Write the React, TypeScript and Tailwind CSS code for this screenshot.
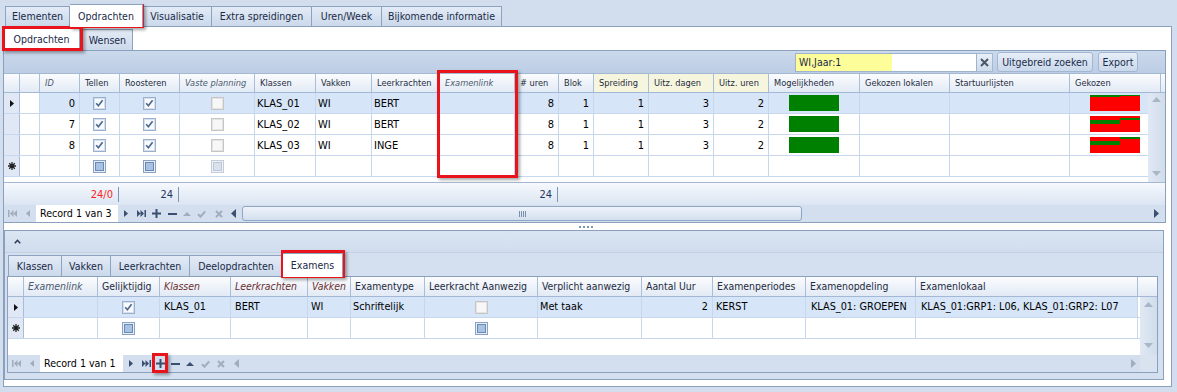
import React from 'react';

const F = "font-['DejaVu_Sans_Condensed','Liberation_Sans',sans-serif]";

type CK = 'on' | 'dis' | 'new' | 'newdis';
function Check({ k }: { k: CK }) {
  if (k === 'on')
    return (
      <svg width="13" height="13" viewBox="0 0 13 13">
        <rect x="0.5" y="0.5" width="12" height="12" fill="#eef2f8" stroke="#9bb0cc" />
        <rect x="1.5" y="1.5" width="10" height="10" fill="#f8fafd" stroke="#d6e0ec" />
        <path d="M3.2 6.2 L5.4 8.7 L9.6 3.3" fill="none" stroke="#4b6890" strokeWidth="1.7" />
      </svg>
    );
  if (k === 'dis')
    return (
      <svg width="13" height="13" viewBox="0 0 13 13">
        <rect x="0.5" y="0.5" width="12" height="12" fill="#f4f4f4" stroke="#c6c6c6" />
        <rect x="1.5" y="1.5" width="10" height="10" fill="#f7f7f7" stroke="#e4e4e4" />
      </svg>
    );
  if (k === 'new')
    return (
      <svg width="13" height="13" viewBox="0 0 13 13">
        <rect x="0.5" y="0.5" width="12" height="12" fill="#e8eef7" stroke="#8aa2c3" />
        <rect x="2.5" y="2.5" width="8" height="8" fill="#a8c2e3" stroke="#6b89b1" />
      </svg>
    );
  return (
    <svg width="13" height="13" viewBox="0 0 13 13">
      <rect x="0.5" y="0.5" width="12" height="12" fill="#eef1f5" stroke="#c3ccd8" />
      <rect x="2.5" y="2.5" width="8" height="8" fill="#d9e1ec" stroke="#bcc8d8" />
    </svg>
  );
}

const DARK = '#3d4f70';
const GRAY = '#a2acba';

const IFirst = ({ c }: { c: string }) => (
  <svg width="9" height="7" viewBox="0 0 9 7">
    <rect x="0" y="0" width="1.5" height="7" fill={c} />
    <path d="M5.5 0L2 3.5L5.5 7Z M9 0L5.5 3.5L9 7Z" fill={c} />
  </svg>
);
const IPrev = ({ c }: { c: string }) => (
  <svg width="4" height="7" viewBox="0 0 4 7">
    <path d="M4 0L0 3.5L4 7Z" fill={c} />
  </svg>
);
const INext = ({ c }: { c: string }) => (
  <svg width="4" height="7" viewBox="0 0 4 7">
    <path d="M0 0L4 3.5L0 7Z" fill={c} />
  </svg>
);
const ILast = ({ c }: { c: string }) => (
  <svg width="9" height="7" viewBox="0 0 9 7">
    <path d="M0 0L3.5 3.5L0 7Z M3.5 0L7 3.5L3.5 7Z" fill={c} />
    <rect x="7.5" y="0" width="1.5" height="7" fill={c} />
  </svg>
);
const IPlus = ({ c }: { c: string }) => (
  <svg width="9" height="9" viewBox="0 0 9 9">
    <rect x="3.5" y="0" width="2" height="9" fill={c} />
    <rect x="0" y="3.5" width="9" height="2" fill={c} />
  </svg>
);
const IMinus = ({ c }: { c: string }) => (
  <svg width="9" height="2" viewBox="0 0 9 2">
    <rect x="0" y="0" width="9" height="2" fill={c} />
  </svg>
);
const IUp = ({ c }: { c: string }) => (
  <svg width="8" height="5" viewBox="0 0 8 5">
    <path d="M0 5L4 1L8 5Z" fill={c} />
  </svg>
);
const ICheck = ({ c }: { c: string }) => (
  <svg width="9" height="8" viewBox="0 0 9 8">
    <path d="M1 4.2L3.5 6.7L8.2 1.3" fill="none" stroke={c} strokeWidth="2" />
  </svg>
);
const ICancel = ({ c }: { c: string }) => (
  <svg width="8" height="8" viewBox="0 0 8 8">
    <path d="M1 1L7 7M7 1L1 7" fill="none" stroke={c} strokeWidth="2" />
  </svg>
);
const ScrollLeft = ({ c }: { c: string }) => (
  <svg width="5" height="9" viewBox="0 0 5 9">
    <path d="M5 0L0 4.5L5 9Z" fill={c} />
  </svg>
);
const ScrollRight = ({ c }: { c: string }) => (
  <svg width="5" height="9" viewBox="0 0 5 9">
    <path d="M0 0L5 4.5L0 9Z" fill={c} />
  </svg>
);
const ScrollUp = () => (
  <svg width="9" height="5" viewBox="0 0 9 5">
    <path d="M0 5L4.5 0L9 5Z" fill="#a9b6c8" />
  </svg>
);
const ScrollDown = () => (
  <svg width="9" height="5" viewBox="0 0 9 5">
    <path d="M0 0L4.5 5L9 0Z" fill="#a9b6c8" />
  </svg>
);
const RowArrow = () => (
  <svg width="4" height="7" viewBox="0 0 4 7">
    <path d="M0 0L4 3.5L0 7Z" fill="#111" />
  </svg>
);
const NewStar = () => (
  <svg width="8" height="8" viewBox="0 0 8 8">
    <path d="M4 0V8M0 4H8M1.2 1.2L6.8 6.8M6.8 1.2L1.2 6.8" stroke="#222" strokeWidth="1.3" />
    <rect x="2.5" y="2.5" width="3" height="3" fill="#222" />
  </svg>
);

function Gekozen({ v }: { v: number }) {
  return (
    <svg width="50" height="16" viewBox="0 0 50 16">
      <rect x="0" y="0" width="50" height="16" fill="#ff0000" />
      {v === 1 && (
        <>
          <rect x="0" y="0" width="30" height="2" fill="#008000" />
          <rect x="30" y="0" width="20" height="1" fill="#008000" />
        </>
      )}
      {v === 2 && (
        <>
          <rect x="0" y="4" width="30" height="4" fill="#008000" />
          <rect x="30" y="2" width="20" height="2" fill="#008000" />
        </>
      )}
      {v === 3 && (
        <>
          <rect x="0" y="4" width="30" height="4" fill="#008000" />
          <rect x="30" y="0" width="20" height="2" fill="#008000" />
        </>
      )}
    </svg>
  );
}

type Col = { w: string; label: string; it?: boolean; mar?: boolean; right?: boolean; yel?: boolean };

const topCols: Col[] = [
  { w: 'w-[16px]', label: '' },
  { w: 'w-[20px]', label: '' },
  { w: 'w-[40px]', label: 'ID', it: true, right: true },
  { w: 'w-[40px]', label: 'Tellen' },
  { w: 'w-[60px]', label: 'Roosteren' },
  { w: 'w-[75px]', label: 'Vaste planning', it: true },
  { w: 'w-[61px]', label: 'Klassen' },
  { w: 'w-[56px]', label: 'Vakken' },
  { w: 'w-[68px]', label: 'Leerkrachten' },
  { w: 'w-[75px]', label: 'Examenlink', it: true },
  { w: 'w-[44px]', label: '# uren', right: true },
  { w: 'w-[35px]', label: 'Blok', right: true },
  { w: 'w-[55px]', label: 'Spreiding', right: true, yel: true },
  { w: 'w-[65px]', label: 'Uitz. dagen', right: true, yel: true },
  { w: 'w-[55px]', label: 'Uitz. uren', right: true, yel: true },
  { w: 'w-[91px]', label: 'Mogelijkheden' },
  { w: 'w-[90px]', label: 'Gekozen lokalen' },
  { w: 'w-[120px]', label: 'Startuurlijsten' },
  { w: 'w-[91px]', label: 'Gekozen' },
];

const botCols: Col[] = [
  { w: 'w-[16px]', label: '' },
  { w: 'w-[74px]', label: 'Examenlink', it: true },
  { w: 'w-[62px]', label: 'Gelijktijdig' },
  { w: 'w-[71px]', label: 'Klassen', it: true, mar: true },
  { w: 'w-[77px]', label: 'Leerkrachten', it: true, mar: true },
  { w: 'w-[43px]', label: 'Vakken', it: true, mar: true },
  { w: 'w-[74px]', label: 'Examentype' },
  { w: 'w-[113px]', label: 'Leerkracht Aanwezig' },
  { w: 'w-[104px]', label: 'Verplicht aanwezig' },
  { w: 'w-[71px]', label: 'Aantal Uur', right: true },
  { w: 'w-[93px]', label: 'Examenperiodes' },
  { w: 'w-[110px]', label: 'Examenopdeling' },
  { w: 'w-[222px]', label: 'Examenlokaal' },
];

function HeaderCell({ c, size, pad }: { c: Col; size: string; pad: string }) {
  const color = c.mar ? 'text-[#6a2d2d]' : c.it ? 'text-[#4c596e]' : 'text-[#1e2b40]';
  return (
    <div
      className={`${c.w} ${size} ${pad} shrink-0 h-full border-r border-[#aabed8] flex items-center whitespace-nowrap overflow-hidden ${
        c.yel ? 'bg-[#f6f6df]' : ''
      } ${c.it ? 'italic' : ''} ${color}`}
    >
      {c.label}
    </div>
  );
}

function Cell({ c, sel, pad, children }: { c: Col; sel?: boolean; pad: string; children?: React.ReactNode }) {
  return (
    <div
      className={`${c.w} shrink-0 h-full border-r border-[#c6d7ee] flex items-center whitespace-nowrap overflow-hidden text-black ${
        sel ? 'bg-[#d6e5f8]' : ''
      } ${c.right ? 'justify-end pr-[4px]' : pad}`}
    >
      {children}
    </div>
  );
}

function Indicator({ kind }: { kind: 'sel' | 'new' | '' }) {
  return (
    <div className="w-[16px] shrink-0 h-full bg-[#dfe8f4] border-r border-[#a9bcd6] flex items-center justify-center">
      {kind === 'sel' && <RowArrow />}
      {kind === 'new' && <NewStar />}
    </div>
  );
}

const topRows = [
  { id: '0', k: 'KLAS_01', v: 'WI', l: 'BERT', g: 1, sel: true },
  { id: '7', k: 'KLAS_02', v: 'WI', l: 'BERT', g: 2, sel: false },
  { id: '8', k: 'KLAS_03', v: 'WI', l: 'INGE', g: 3, sel: false },
];

function TopRow({ r }: { r: (typeof topRows)[number] | null }) {
  const s = !!r?.sel;
  const isNew = r === null;
  const nums = ['8', '1', '1', '3', '2'];
  return (
    <div className="flex h-[21px] border-b border-[#c6d7ee]">
      <Indicator kind={s ? 'sel' : isNew ? 'new' : ''} />
      <Cell c={topCols[1]} pad="pl-[2px]" />
      <Cell c={topCols[2]} sel={s} pad="pl-[2px]">{r?.id}</Cell>
      <Cell c={topCols[3]} sel={s} pad="justify-center">
        <Check k={isNew ? 'new' : 'on'} />
      </Cell>
      <Cell c={topCols[4]} sel={s} pad="justify-center">
        <Check k={isNew ? 'new' : 'on'} />
      </Cell>
      <Cell c={topCols[5]} sel={s} pad="justify-center">
        <Check k={isNew ? 'newdis' : 'dis'} />
      </Cell>
      <Cell c={topCols[6]} sel={s} pad="pl-[2px]">{r?.k}</Cell>
      <Cell c={topCols[7]} sel={s} pad="pl-[2px]">{r?.v}</Cell>
      <Cell c={topCols[8]} sel={s} pad="pl-[2px]">{r?.l}</Cell>
      <Cell c={topCols[9]} sel={s} pad="pl-[2px]" />
      {nums.map((n, i) => (
        <Cell key={i} c={topCols[10 + i]} sel={s} pad="pl-[2px]">
          {r ? n : ''}
        </Cell>
      ))}
      <Cell c={topCols[15]} sel={s} pad="justify-center">
        {r && <div className="w-[50px] h-[16px] bg-[#008000]" />}
      </Cell>
      <Cell c={topCols[16]} sel={s} pad="pl-[2px]" />
      <Cell c={topCols[17]} sel={s} pad="pl-[2px]" />
      <Cell c={topCols[18]} sel={s} pad="justify-center">
        {r && <Gekozen v={r.g} />}
      </Cell>
    </div>
  );
}

function BotRow({ isNew }: { isNew?: boolean }) {
  const s = !isNew;
  const P = 'pl-[4px]';
  return (
    <div className="flex h-[21px] border-b border-[#c6d7ee] text-[10.8px]">
      <Indicator kind={isNew ? 'new' : 'sel'} />
      <Cell c={botCols[1]} sel={s} pad={P} />
      <Cell c={botCols[2]} sel={s} pad="justify-center">
        <Check k={isNew ? 'new' : 'on'} />
      </Cell>
      <Cell c={botCols[3]} sel={s} pad={P}>{isNew ? '' : 'KLAS_01'}</Cell>
      <Cell c={botCols[4]} sel={s} pad={P}>{isNew ? '' : 'BERT'}</Cell>
      <Cell c={botCols[5]} sel={s} pad="pl-[3px]">{isNew ? '' : 'WI'}</Cell>
      <Cell c={botCols[6]} sel={s} pad="pl-[2px]">{isNew ? '' : 'Schriftelijk'}</Cell>
      <Cell c={botCols[7]} sel={s} pad="justify-center">
        <Check k={isNew ? 'new' : 'dis'} />
      </Cell>
      <Cell c={botCols[8]} sel={s} pad="pl-[2px]">{isNew ? '' : 'Met taak'}</Cell>
      <Cell c={botCols[9]} sel={s} pad={P}>{isNew ? '' : '2'}</Cell>
      <Cell c={botCols[10]} sel={s} pad="pl-[3px]">{isNew ? '' : 'KERST'}</Cell>
      <Cell c={botCols[11]} sel={s} pad="pl-[5px]">{isNew ? '' : 'KLAS_01: GROEPEN'}</Cell>
      <Cell c={botCols[12]} sel={s} pad="pl-[5px]">{isNew ? '' : 'KLAS_01:GRP1: L06, KLAS_01:GRP2: L07'}</Cell>
    </div>
  );
}

function FooterCell({ w, red, children }: { w: string; red?: boolean; children: React.ReactNode }) {
  return (
    <div className={`${w} shrink-0 h-[16px] flex items-center justify-end`}>
      <span className={red ? 'text-[#ff1c1c]' : 'text-[#1f3560]'}>{children}</span>
      <span className="ml-[5px] mr-[1px] w-px h-[15px] bg-[#7d94b6]" />
    </div>
  );
}

function Tab({ w, label, active, h }: { w: string; label: string; active?: boolean; h: string }) {
  return (
    <div
      className={`${w} ${h} shrink-0 flex items-center justify-center whitespace-nowrap text-[10.5px] text-[#1b2a47] border-t border-r border-[#8da3c0] ${
        active ? 'bg-white relative z-10 -mb-px' : 'bg-linear-to-b from-[#e3ebf6] to-[#cbd9eb]'
      }`}
    >
      {label}
    </div>
  );
}

function Grip() {
  return (
    <div className="flex gap-[1px]">
      <span className="w-px h-[6px] bg-[#7b90ad]" />
      <span className="w-px h-[6px] bg-[#7b90ad]" />
      <span className="w-px h-[6px] bg-[#7b90ad]" />
      <span className="w-px h-[6px] bg-[#7b90ad]" />
    </div>
  );
}

const redBox = 'absolute border-[3px] border-[#e8131b] shadow-[2px_2px_3px_rgba(0,0,0,0.35)] pointer-events-none';

export default function App() {
  return (
    <div className={`relative w-[1177px] h-[392px] overflow-hidden bg-[#d2deee] text-[11px] leading-none ${F}`}>
      {/* top tab strip */}
      <div className="flex items-end h-[26px] pl-[5px]">
        <div className="w-[65px] h-[20px] shrink-0 flex items-center justify-center text-[10.5px] text-[#1b2a47] border border-b-0 border-[#8da3c0] bg-linear-to-b from-[#e3ebf6] to-[#cbd9eb]">
          Elementen
        </div>
        <Tab w="w-[73px]" h="h-[23px]" label="Opdrachten" active />
        <Tab w="w-[69px]" h="h-[20px]" label="Visualisatie" />
        <Tab w="w-[100px]" h="h-[20px]" label="Extra spreidingen" />
        <Tab w="w-[70px]" h="h-[20px]" label="Uren/Week" />
        <Tab w="w-[120px]" h="h-[20px]" label="Bijkomende informatie" />
      </div>

      {/* tab page */}
      <div className="ml-[3px] w-[1169px] h-[361px] border border-[#8ba0bc] bg-white flex flex-col">
        {/* inner tabs */}
        <div className="h-[23px] shrink-0 flex items-end">
          <div className="w-[76px] h-[22px] shrink-0 bg-white border-t border-r border-[#8da3c0] flex items-center justify-center text-[10.5px] text-[#1b2a47]">
            Opdrachten
          </div>
          <div className="ml-[2px] w-[51px] h-[21px] shrink-0 border-t border-l border-r border-[#8da3c0] bg-linear-to-b from-[#e3ebf6] to-[#cbd9eb] flex items-center justify-center text-[10.5px] text-[#1b2a47]">
            Wensen
          </div>
        </div>

        {/* top grid */}
        <div className="w-[1162px] h-[173px] shrink-0 border-y border-r border-[#8ba0bc] flex flex-col">
          {/* find panel */}
          <div className="h-[22px] shrink-0 flex items-center justify-end pr-[27px] bg-linear-to-b from-[#cbd9ec] to-[#bccde4] text-[10.5px]">
            <div className="w-[182px] h-[19px] border border-[#9fb3cf] bg-white flex">
              <div className="w-[96px] h-full bg-[#fdfd99] flex items-center pl-[3px] text-[#1a2a48]">WI,Jaar:1</div>
            </div>
            <div className="w-[16px] h-[19px] border border-[#a6b9d3] border-l-0 bg-linear-to-b from-[#e8eff8] to-[#cfdcec] flex items-center justify-center">
              <svg width="9" height="9" viewBox="0 0 9 9">
                <path d="M1 1L8 8M8 1L1 8" stroke="#4b5668" strokeWidth="2" />
              </svg>
            </div>
            <div className="ml-[4px] w-[96px] h-[20px] rounded-[3px] border border-[#a3b7d2] bg-linear-to-b from-[#e7eef8] to-[#c9d8eb] flex items-center justify-center text-[#1c2c4b]">
              Uitgebreid zoeken
            </div>
            <div className="ml-[5px] w-[40px] h-[20px] rounded-[3px] border border-[#a3b7d2] bg-linear-to-b from-[#e7eef8] to-[#c9d8eb] flex items-center justify-center text-[#1c2c4b]">
              Export
            </div>
          </div>
          {/* header */}
          <div className="h-[20px] shrink-0 flex bg-linear-to-b from-[#fbfcfe] to-[#e2eaf5] border-y border-[#a3b8d4]">
            {topCols.map((c, i) => (
              <HeaderCell key={i} c={c} size="text-[9.2px]" pad="pl-[5px]" />
            ))}
          </div>
          {/* body */}
          <div className="h-[89px] shrink-0 flex">
            <div className="w-[1144px] h-full overflow-hidden bg-white">
              <div className="w-[1157px]">
                {topRows.map((r, i) => (
                  <TopRow key={i} r={r} />
                ))}
                <TopRow r={null} />
              </div>
            </div>
            <div className="w-[17px] h-full bg-linear-to-r from-[#e0e8f3] to-[#d1ddec] flex flex-col items-center justify-between pt-[4px] pb-[6px]">
              <ScrollUp />
              <ScrollDown />
            </div>
          </div>
          {/* footer */}
          <div className="h-[23px] shrink-0 flex items-center border-t border-[#a5b8d2] bg-linear-to-b from-[#f6f9fd] to-[#dbe5f2]">
            <div className="w-[76px] shrink-0" />
            <FooterCell w="w-[40px]" red>
              24/0
            </FooterCell>
            <FooterCell w="w-[60px]">24</FooterCell>
            <div className="w-[335px] shrink-0" />
            <FooterCell w="w-[44px]">24</FooterCell>
          </div>
          {/* navigator + h scroll */}
          <div className="h-[17px] shrink-0 flex items-center bg-[#d3dfee]">
            <div className="w-[16px] flex justify-center"><IFirst c={GRAY} /></div>
            <div className="w-[16px] flex justify-center"><IPrev c={GRAY} /></div>
            <div className="w-[82px] h-full bg-white flex items-center pl-[4px] text-black text-[10.6px]">Record 1 van 3</div>
            <div className="w-[16px] flex justify-center"><INext c={DARK} /></div>
            <div className="w-[15px] flex justify-center"><ILast c={DARK} /></div>
            <div className="w-[15px] flex justify-center"><IPlus c={DARK} /></div>
            <div className="w-[16px] flex justify-center"><IMinus c={DARK} /></div>
            <div className="w-[14px] flex justify-center"><IUp c={GRAY} /></div>
            <div className="w-[14px] flex justify-center"><ICheck c={GRAY} /></div>
            <div className="w-[21px] flex justify-center"><ICancel c={GRAY} /></div>
            <div className="w-[9px] flex justify-center"><ScrollLeft c={DARK} /></div>
            <div className="flex-1 h-full flex items-center">
              <div className="ml-[4px] w-[560px] h-[15px] rounded-[3px] border border-[#8fa6c5] bg-linear-to-b from-[#eef3fa] to-[#d3dfee] flex items-center justify-center">
                <Grip />
              </div>
            </div>
            <div className="w-[17px] flex justify-center"><ScrollRight c={DARK} /></div>
          </div>
        </div>

        {/* splitter */}
        <div className="h-[7px] shrink-0 flex items-center justify-center gap-[2px] pr-[4px]">
          <span className="w-[2px] h-[2px] bg-[#7d93b2]" />
          <span className="w-[2px] h-[2px] bg-[#7d93b2]" />
          <span className="w-[2px] h-[2px] bg-[#7d93b2]" />
          <span className="w-[2px] h-[2px] bg-[#7d93b2]" />
        </div>

        {/* bottom panel */}
        <div className="w-[1160px] h-[150px] shrink-0 border border-[#8ba0bc] bg-[#d4e0ef] flex flex-col">
          <div className="h-[22px] shrink-0 flex items-center pl-[9px] bg-linear-to-b from-[#dbe5f2] to-[#d0ddee] border-b border-[#c3d1e4]">
            <svg width="7" height="5" viewBox="0 0 7 5">
              <path d="M0.8 4.2L3.5 1.3L6.2 4.2" fill="none" stroke="#2b3b55" strokeWidth="1.6" />
            </svg>
          </div>
          <div className="h-[23px] shrink-0 flex items-end pl-[3px]">
            <div className="w-[54px] h-[21px] shrink-0 flex items-center justify-center text-[10.5px] text-[#1b2a47] border border-b-0 border-[#8da3c0] bg-linear-to-b from-[#e3ebf6] to-[#cbd9eb]">
              Klassen
            </div>
            <Tab w="w-[49px]" h="h-[21px]" label="Vakken" />
            <Tab w="w-[79px]" h="h-[21px]" label="Leerkrachten" />
            <Tab w="w-[93px]" h="h-[21px]" label="Deelopdrachten" />
            <Tab w="w-[60px]" h="h-[24px]" label="Examens" active />
          </div>
          <div className="ml-[2px] w-[1151px] h-[97px] shrink-0 border border-[#8ba0bc] bg-white flex flex-col">
            <div className="h-[20px] shrink-0 flex bg-linear-to-b from-[#fbfcfe] to-[#e2eaf5] border-b border-[#a3b8d4]">
              {botCols.map((c, i) => (
                <HeaderCell key={i} c={c} size="text-[10.4px]" pad="pl-[4px]" />
              ))}
              <div className="flex-1" />
            </div>
            <div className="h-[58px] shrink-0 flex">
              <div className="w-[1132px] h-full overflow-hidden">
                <BotRow />
                <BotRow isNew />
              </div>
              <div className="w-[17px] h-full bg-linear-to-r from-[#e0e8f3] to-[#d1ddec] flex flex-col items-center justify-between pt-[5px] pb-[7px]">
                <ScrollUp />
                <ScrollDown />
              </div>
            </div>
            <div className="h-[17px] shrink-0 flex items-center bg-[#d3dfee]">
              <div className="w-[16px] flex justify-center"><IFirst c={GRAY} /></div>
              <div className="w-[16px] flex justify-center"><IPrev c={GRAY} /></div>
              <div className="w-[83px] h-full bg-white flex items-center pl-[4px] text-black text-[10.6px]">Record 1 van 1</div>
              <div className="w-[16px] flex justify-center"><INext c={DARK} /></div>
              <div className="w-[14px] flex justify-center"><ILast c={DARK} /></div>
              <div className="w-[14px] flex justify-center"><IPlus c={DARK} /></div>
              <div className="w-[16px] flex justify-center"><IMinus c={DARK} /></div>
              <div className="w-[14px] flex justify-center"><IUp c={DARK} /></div>
              <div className="w-[16px] flex justify-center"><ICheck c={GRAY} /></div>
              <div className="w-[16px] flex justify-center"><ICancel c={GRAY} /></div>
              <div className="w-[15px] flex justify-center"><ScrollLeft c={GRAY} /></div>
              <div className="flex-1 h-full" />
              <div className="w-[14px] flex justify-center"><ScrollRight c={GRAY} /></div>
              <div className="w-[17px] h-full bg-[#d9e3f0]" />
            </div>
          </div>
        </div>
      </div>

      {/* annotation boxes */}
      <div className={`${redBox} left-[70px] top-[4px] w-[74px] h-[24px]`} />
      <div className={`${redBox} left-[2px] top-[26px] w-[81px] h-[25px]`} />
      <div className={`${redBox} left-[437px] top-[70px] w-[81px] h-[108px]`} />
      <div className={`${redBox} left-[281px] top-[250px] w-[64px] h-[28px]`} />
      <div className={`${redBox} left-[152px] top-[353px] w-[16px] h-[20px]`} />
    </div>
  );
}
